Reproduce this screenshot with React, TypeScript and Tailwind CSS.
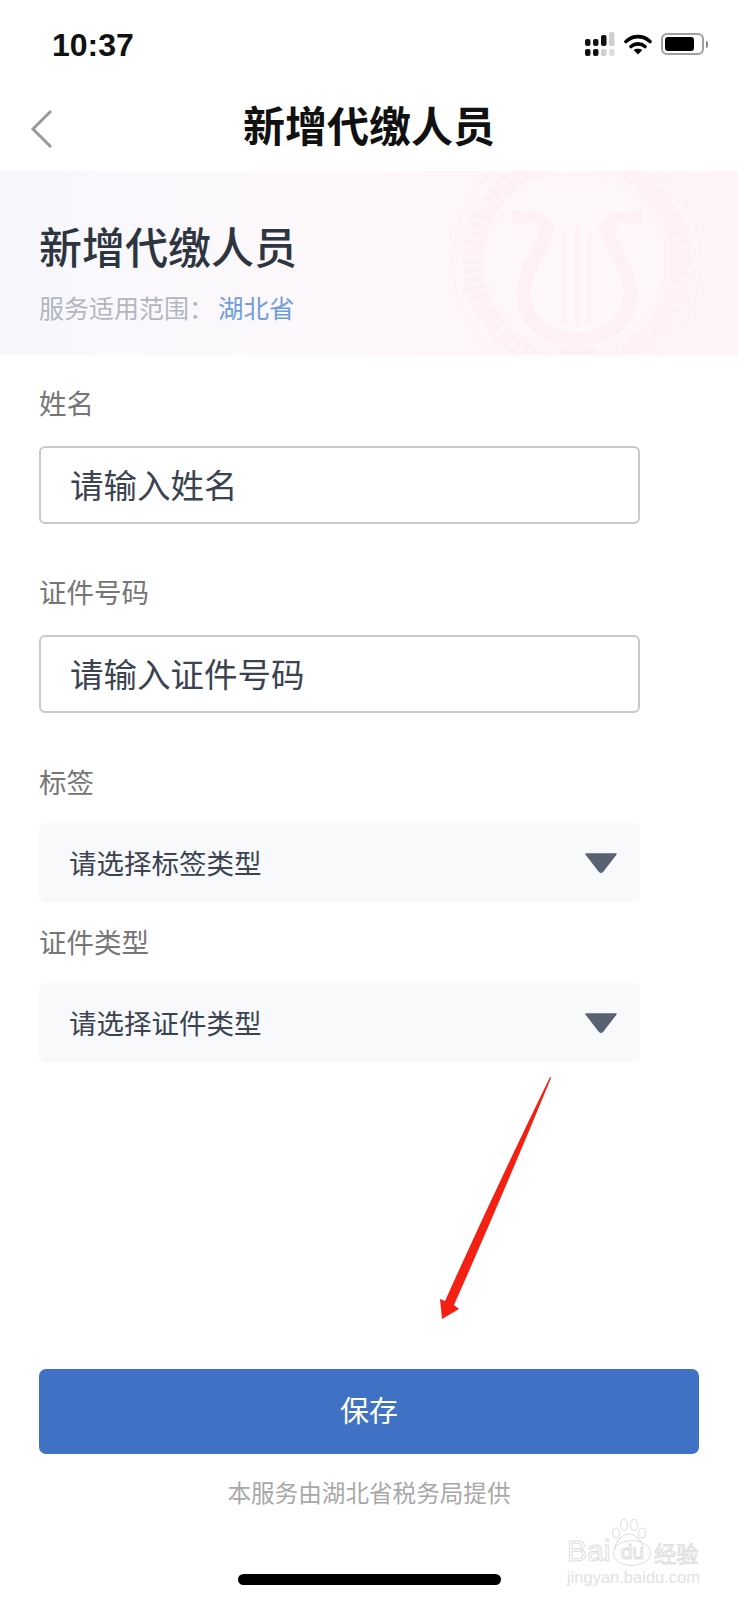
const CJK = "font-['Noto_Sans_CJK_SC','Noto_Sans',sans-serif]";

function Signal() {
  return (
    <svg width="30" height="24" viewBox="0 0 30 24" className="block">
      <rect x="0" y="7" width="5.500" height="7" rx="2" fill="#111" />
      <rect x="8" y="7" width="5.500" height="7" rx="2" fill="#111" />
      <rect x="16" y="3" width="5.500" height="11" rx="2" fill="#111" />
      <rect x="24" y="0" width="5.500" height="14" rx="2" fill="#cfcfcf" />
      <rect x="0" y="17" width="5.500" height="7" rx="2" fill="#111" />
      <rect x="8" y="17" width="5.500" height="7" rx="2" fill="#111" />
      <rect x="16" y="17" width="5.500" height="7" rx="2" fill="#cfcfcf" />
      <rect x="24" y="17" width="5.500" height="7" rx="2" fill="#dcdcdc" />
    </svg>
  );
}

function Wifi() {
  return (
    <svg width="28" height="22" viewBox="0 0 28 22" className="block">
      <path d="M2 8.500C9 2 19 2 26 8.500" fill="none" stroke="#000" strokeWidth="3.600" strokeLinecap="round" />
      <path d="M7 13.500C11 10 17 10 21 13.500" fill="none" stroke="#000" strokeWidth="3.600" strokeLinecap="round" />
      <path d="M14 21.500L9.600 17C12 15.200 16 15.200 18.400 17Z" fill="#000" />
    </svg>
  );
}

function Battery() {
  return (
    <div className="flex items-center gap-[2px]">
      <div className="w-[43px] h-[22px] rounded-[6px] border-2 border-[#a0a0a0] p-[2px]">
        <div className="w-[29px] h-full rounded-[3px] bg-black" />
      </div>
      <div className="w-[2px] h-[7px] rounded-r-sm bg-[#8a8a8a]" />
    </div>
  );
}

function Seal() {
  return (
    <svg viewBox="0 0 270 270" width="270" height="270" className="absolute left-[442px] top-[-44px]" fill="none">
      <circle cx="135" cy="135" r="124" stroke="#fff1f3" strokeWidth="2" />
      <circle cx="135" cy="135" r="104" stroke="#fff0f3" strokeWidth="20" strokeDasharray="6 3" />
      <circle cx="135" cy="135" r="86" fill="#fff8f9" />
      <path d="M70 90C90 90 100 92 106 102C98 128 74 150 84 182C92 204 116 212 135 212C154 212 178 204 186 182C196 150 172 128 164 102C170 92 180 90 200 90" stroke="#fff0f3" strokeWidth="14" />
      <path d="M122 106V196M135 100V198M148 106V196" stroke="#fff2f4" strokeWidth="5" />
      <circle cx="90" cy="100" r="5" fill="#fff8f9" />
      <circle cx="180" cy="100" r="5" fill="#fff8f9" />
      <rect x="116" y="220" width="38" height="14" fill="#fff0f3" />
    </svg>
  );
}

function TextField({ label, placeholder, top }: { label: string; placeholder: string; top: string }) {
  return (
    <div className={top}>
      <div className="h-[40px] pb-[4px] flex items-center text-[27.500px] leading-none text-[#767676]">{label}</div>
      <div className="mt-[21px] w-[601px] h-[78px] border-2 border-[#c9c9c9] rounded-[6px] pl-[29px] pb-[2px] flex items-center text-[33.500px] leading-none text-[#3b4351]">
        {placeholder}
      </div>
    </div>
  );
}

function SelectField({ label, placeholder, top }: { label: string; placeholder: string; top: string }) {
  return (
    <div className={top}>
      <div className="h-[40px] flex items-center text-[27.500px] leading-none text-[#767676]">{label}</div>
      <div className="mt-[21px] w-[601px] h-[79px] bg-[#f8f9fb] rounded-[6px] pl-[30px] pr-[22px] flex items-center justify-between text-[27.500px] leading-none text-[#3b4351]">
        <span>{placeholder}</span>
        <svg width="34" height="20" viewBox="0 0 34 20">
          <path d="M2 1H32L18.500 18.500Q17 20 15.500 18.500Z" fill="#5a6272" stroke="#5a6272" strokeWidth="1.500" strokeLinejoin="round" />
        </svg>
      </div>
    </div>
  );
}

function Watermark() {
  return (
    <div className="absolute left-[567px] top-[1519px] w-[132px] h-[66px]">
      <svg width="40" height="30" viewBox="0 0 40 30" className="absolute left-[42px] top-0" fill="none" stroke="#e0e0e0" strokeWidth="1.200">
        <ellipse cx="7" cy="14" rx="3.500" ry="5" />
        <ellipse cx="15" cy="6" rx="3.500" ry="5.500" />
        <ellipse cx="25" cy="6" rx="3.500" ry="5.500" />
        <ellipse cx="33" cy="14" rx="3.500" ry="5" />
        <path d="M6 30C6 22 14 15 20 15C26 15 34 22 34 30" />
      </svg>
      <div className="h-[47px] flex items-end font-['Liberation_Sans',sans-serif] text-[30px] leading-none text-transparent [-webkit-text-stroke:1px_#dddddd]">
        <span>Bai</span>
        <span className="ml-[3px] w-[38px] text-[21px] h-[26px] rounded-[50%] border border-[#e0e0e0] text-center">du</span>
        <span className={`ml-[3px] mb-[3px] text-[22px] ${CJK}`}>经验</span>
      </div>
      <div className="mt-[3px] font-['Liberation_Sans',sans-serif] text-[16.500px] leading-[16px] text-[#e2e2e2] whitespace-nowrap">
        jingyan.baidu.com
      </div>
    </div>
  );
}

function Arrow() {
  return (
    <svg width="130" height="260" viewBox="0 0 130 260" className="absolute left-[435px] top-[1070px]">
      <path d="M115 7L116 8Q70 120 19 235L24 239L7 249L5 229L10 231Q60 120 115 7Z" fill="#f32013" />
    </svg>
  );
}

export default function App() {
  return (
    <div className={`relative w-[738px] h-[1600px] bg-white overflow-hidden ${CJK}`}>
      <div className="h-[88px] pl-[52px] pr-[30px] pt-[27px] flex justify-between items-start">
        <span className="font-['Liberation_Sans',sans-serif] font-bold text-[32px] leading-[36px] text-[#111]">10:37</span>
        <div className="flex items-center gap-[8px] pt-[5px]">
          <Signal />
          <div className="ml-[1px]"><Wifi /></div>
          <div className="ml-[1px]"><Battery /></div>
        </div>
      </div>
      <div className="relative h-[83px] flex items-center justify-center">
        <svg width="24" height="40" viewBox="0 0 24 40" className="absolute left-[30px] top-[21px]" fill="none">
          <path d="M21 2L3 20L21 38" stroke="#9a9a9a" strokeWidth="3" />
        </svg>
        <h1 className="text-[42px] leading-none font-bold text-[#111] -translate-y-[6px]">新增代缴人员</h1>
      </div>
      <div className="relative h-[184px] overflow-hidden bg-[linear-gradient(90deg,#f7f8fc_0%,#fdf8fb_45%,#fff4f6_100%)] pl-[39px] pt-[49px]">
        <Seal />
        <div className="relative text-[43px] leading-[50px] font-medium text-[#2d3540]">新增代缴人员</div>
        <div className="relative mt-[22px] text-[25px] leading-[30px] text-[#b2b6bd]">
          服务适用范围：<span className="ml-[4px] text-[25.500px] text-[#6d9fdc]">湖北省</span>
        </div>
      </div>
      <div className="pl-[39px]">
        <TextField label="姓名" placeholder="请输入姓名" top="mt-[30px]" />
        <TextField label="证件号码" placeholder="请输入证件号码" top="mt-[50px]" />
        <SelectField label="标签" placeholder="请选择标签类型" top="mt-[49px]" />
        <SelectField label="证件类型" placeholder="请选择证件类型" top="mt-[20px]" />
      </div>
      <Arrow />
      <div className="absolute left-[39px] right-[39px] top-[1369px]">
        <button className="w-full h-[85px] pb-[4px] rounded-[7px] bg-[#3f72c4] text-white text-[29px] leading-none">保存</button>
        <p className="mt-[23px] text-center text-[23.600px] leading-[30px] text-[#a8a8a8]">本服务由湖北省税务局提供</p>
      </div>
      <Watermark />
      <div className="absolute left-[238px] top-[1574px] w-[263px] h-[11px] rounded-full bg-black" />
    </div>
  );
}
